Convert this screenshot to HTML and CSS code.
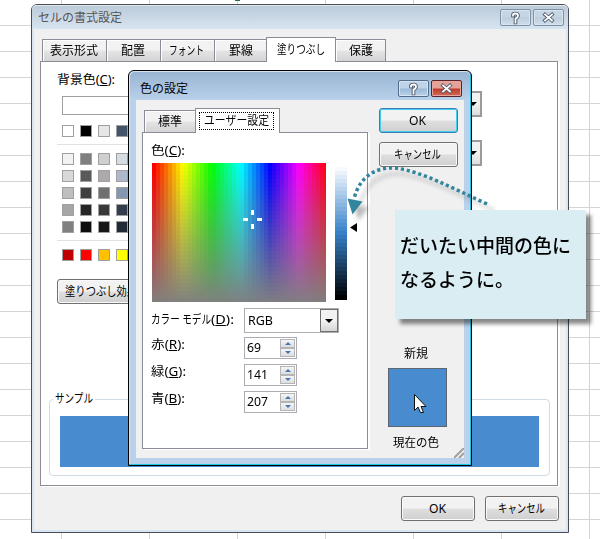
FILE: index.html
```html
<!DOCTYPE html>
<html lang="ja">
<head>
<meta charset="utf-8">
<title>セルの書式設定</title>
<link rel="stylesheet" href="styles.css">
</head>
<body>
<main class="sheet">
  <i class="cell-mark"></i>
  <section class="window outer">
    <header class="titlebar"><span class="t" data-w="84">セルの書式設定</span>
      <span class="caption-btn"><svg width="29" height="15"><path d="M12 5.500V5q0-1.500 2.500-1.500T17 5.500t-2.500 3V9.500M14.500 11v1.500" class="q-o"/><path d="M12 5.500V5q0-1.500 2.500-1.500T17 5.500t-2.500 3V9.500M14.500 11v1.500" class="q-i"/></svg></span>
      <span class="caption-btn"><svg width="29" height="15"><path d="M11 4.500l7 6m0-6l-7 6" class="x-o"/><path d="M11 4.500l7 6m0-6l-7 6" class="x-i"/></svg></span>
    </header>
    <div class="client">
      <nav class="tabs">
        <span class="tab w1"><b class="t" data-w="48">表示形式</b></span><span class="tab w2"><b class="t" data-w="24">配置</b></span><span class="tab w3"><b class="t" data-w="35">フォント</b></span><span class="tab w4"><b class="t" data-w="24">罫線</b></span><span class="tab active w5"><b class="t" data-w="48">塗りつぶし</b></span><span class="tab w6"><b class="t" data-w="24">保護</b></span>
      </nav>
      <div class="panel">
        <div class="fill-area">
          <div class="fill-left">
            <div class="field-label"><span class="t" data-w="58">背景色(<u>C</u>):</span></div>
            <div class="no-color"></div>
            <div class="swatches top"><i class="c1"></i><i class="c2"></i><i class="c3"></i><i class="c4"></i></div>
            <div class="swatches grid"><i class="g1"></i><i class="g2"></i><i class="g3"></i><i class="g4"></i><i class="g5"></i><i class="g6"></i><i class="g7"></i><i class="g8"></i><i class="g9"></i><i class="g10"></i><i class="g11"></i><i class="g12"></i><i class="g13"></i><i class="g14"></i><i class="g15"></i><i class="g16"></i><i class="g17"></i><i class="g18"></i><i class="g19"></i><i class="g20"></i></div>
            <div class="swatches std"><i class="s1"></i><i class="s2"></i><i class="s3"></i><i class="s4"></i></div>
            <button class="btn effects"><span class="t" data-w="72">塗りつぶし効果</span></button>
          </div>
          <div class="fill-right"><div class="combo-end"><i></i></div><div class="combo-end"><i></i></div></div>
        </div>
        <fieldset class="sample"><legend><span class="t" data-w="38">サンプル</span></legend><div class="sample-color"></div></fieldset>
      </div>
      <footer class="actions"><button class="btn"><span class="t" data-w="17">OK</span></button><button class="btn"><span class="t" data-w="47">キャンセル</span></button></footer>
    </div>
  </section>

  <section class="window inner">
    <header class="titlebar"><span class="t" data-w="48">色の設定</span>
      <span class="caption-btn"><svg width="29" height="15"><path d="M12 5.500V5q0-1.500 2.500-1.500T17 5.500t-2.500 3V9.500M14.500 11v1.500" class="q-o"/><path d="M12 5.500V5q0-1.500 2.500-1.500T17 5.500t-2.500 3V9.500M14.500 11v1.500" class="q-i"/></svg></span>
      <span class="caption-btn close"><svg width="29" height="15"><path d="M11 4.500l7 6m0-6l-7 6" class="x-o"/><path d="M11 4.500l7 6m0-6l-7 6" class="x-i"/></svg></span>
    </header>
    <div class="client">
      <div class="main-col">
        <nav class="tabs"><span class="tab w7"><b class="t" data-w="24">標準</b></span><span class="tab active w8"><b class="focus"><span class="t" data-w="65">ユーザー設定</span></b></span></nav>
        <div class="panel">
          <div class="color-label"><span class="t" data-w="34">色(<u>C</u>):</span></div>
          <div class="pickers">
            <canvas class="spectrum" width="174" height="139"></canvas>
            <canvas class="ramp" width="12" height="133"></canvas>
            <svg class="marker" width="7" height="9"><path d="M0 4.500L7 0V9z"/></svg>
          </div>
          <div class="form">
            <label class="model"><span class="t" data-w="60">カラー モデル</span><span class="t" data-w="23">(<u>D</u>):</span></label><div class="select"><span class="t" data-w="25">RGB</span><span class="drop"><i></i></span></div>
            <label><span class="t" data-w="34">赤(<u>R</u>):</span></label><div class="spin"><span class="t" data-w="14">69</span><span class="steps"><i></i><i></i></span></div>
            <label><span class="t" data-w="35">緑(<u>G</u>):</span></label><div class="spin"><span class="t" data-w="21">141</span><span class="steps"><i></i><i></i></span></div>
            <label><span class="t" data-w="34">青(<u>B</u>):</span></label><div class="spin"><span class="t" data-w="21">207</span><span class="steps"><i></i><i></i></span></div>
          </div>
        </div>
      </div>
      <aside class="side">
        <button class="btn primary"><span class="t" data-w="17">OK</span></button>
        <button class="btn"><span class="t" data-w="47">キャンセル</span></button>
        <div class="new-label"><span class="t" data-w="24">新規</span></div>
        <div class="preview"></div>
        <div class="current-label"><span class="t" data-w="46">現在の色</span></div>
      </aside>
      <svg class="grip" width="10" height="10"><path d="M0 10L10 0M5 10l5-5"/></svg>
    </div>
  </section>

  <svg class="overlay" width="600" height="539">
    <g class="arrow"><path class="dots" d="M487 204C452 188 421 171 395 168C374 167 359 178 354 199"/><path class="head" d="M347.500 198.500L362.500 201.500L352.500 214.500z"/></g>
    <path class="cross" d="M243 219.500h5M257 219.500h5M252.500 210v5M252.500 224v5"/>
    <path class="pointer" d="M414.500 394.500v16l3.500-3.500 2.500 5.500h3l-2.500-6h5z"/>
  </svg>
  <div class="callout"><span class="t" data-w="171">だいたい中間の色に</span><span class="t" data-w="114">なるように。</span></div>
</main>
<script src="script.js"></script>
</body>
</html>
```
FILE: styles.css
```css
*{box-sizing:border-box}
body{margin:0;font:12px/16px "Noto Sans","Noto Sans CJK JP",sans-serif;color:#000;overflow:hidden}
b,button{font:inherit}
u{text-underline-offset:1px}
.t{display:inline-block;white-space:nowrap;transform-origin:0 50%;flex:none}
.sheet{position:relative;width:600px;height:539px;overflow:hidden;background:linear-gradient(90deg,#d4d4d4 1px,transparent 1px) 61px 0/88px 26px,linear-gradient(#d4d4d4 1px,transparent 1px) 0 25px/88px 26px,#fff}
.cell-mark{position:absolute;left:235px;top:0;width:5px;height:1px;background:#217346}
.window{position:absolute;display:flex;flex-direction:column}
.outer{left:31px;top:4px;width:538px;height:529px;border:1px solid #4b4b55;border-radius:6px 6px 0 0;background:#d9e5f1;padding:0 2px 2px}
.titlebar{display:flex;align-items:center;flex:none}
.outer>.titlebar{height:24px;margin:0 -2px;padding:1px 4px 0 6px;background:linear-gradient(#bbcad9,#d7e4f1);border-radius:5px 5px 0 0;box-shadow:inset 0 1px #e3eaf0;color:#555}
.titlebar .t{margin-right:auto}
.caption-btn{width:31px;height:17px;border:1px solid #7f91a8;border-radius:2px;background:linear-gradient(#c7d6e5 48%,#bccddd 50%,#d0deeb);margin-left:2px;box-shadow:inset 0 0 0 1px #d9e4ee}
.caption-btn svg{display:block}
.caption-btn path{fill:none}
.q-o,.x-o{stroke:#4d586a;stroke-width:3.6;stroke-linecap:square}
.q-i,.x-i{stroke:#fff;stroke-width:1.8;stroke-linecap:square}
.outer>.client{background:#f0f0f0;height:502px;padding:8px 8px 0 6px}
.tabs{display:flex;align-items:flex-end;height:24px;position:relative;z-index:1}
.outer .tabs{padding-left:2px}
.tab{height:22px;border:1px solid #8c8c96;border-bottom:0;background:linear-gradient(#f2f2f2 48%,#e4e4e4 52%,#d4d4d4);display:flex;align-items:center;justify-content:center;box-shadow:inset 1px 1px #fff;margin-right:-1px;padding-right:2px}
.tab.active{height:25px;background:#fff;margin-bottom:-1px;z-index:1;box-shadow:none}
.w1{width:65px}.w2{width:55px}.w3{width:55px}.w4{width:53px}.w5{width:70px}.w6{width:51px}.w7{width:52px}.w8{width:85px}
.w4,.w5,.w6,.w7{padding-right:0}
.panel{border:1px solid #8c8c96;background:#fff;box-shadow:2px 1px #fff}
.outer .panel{width:518px;height:425px;padding:9px 7px 0 8px}
.fill-area{display:flex;justify-content:space-between;height:321px;padding:0 68px 0 8px}
.fill-left{width:90px}
.field-label{height:16px;padding-top:1px}
.no-color{margin:9px 0 0 5px;height:19px;border:1px solid #a0a0a0}
.swatches{display:grid;grid-template-columns:repeat(4,12px);column-gap:6px;row-gap:5px;padding-left:5px}
.swatches i{height:12px;border:1px solid #a0a0a0}
.top{height:20px;margin-top:10px}
.grid{border-top:1px solid #e2e2e2;padding-top:8px;height:96px;margin-top:-1px;align-content:start}
.std{border-top:1px solid #e2e2e2;padding-top:8px}
.c1{background:#fff}.c2{background:#000}.c3{background:#e7e6e6}.c4{background:#44546a}
.g1{background:#f2f2f2}.g2{background:#7f7f7f}.g3{background:#d0cece}.g4{background:#d6dce4}.g5{background:#d9d9d9}.g6{background:#595959}.g7{background:#aeaaaa}.g8{background:#adb9ca}.g9{background:#bfbfbf}.g10{background:#404040}.g11{background:#707070}.g12{background:#8496b0}.g13{background:#a6a6a6}.g14{background:#262626}.g15{background:#3a3838}.g16{background:#333f4f}.g17{background:#808080}.g18{background:#0d0d0d}.g19{background:#171717}.g20{background:#222b35}
.s1{background:#c00000}.s2{background:#f00}.s3{background:#ffc000}.s4{background:#ff0}
.btn{display:flex;align-items:center;justify-content:center;padding:0 2px 0 0;width:74px;height:25px;border:1px solid #707070;border-radius:3px;background:linear-gradient(#f2f2f2 48%,#dfdfdf 52%,#cfcfcf);box-shadow:inset 0 0 0 1px #fafafa;color:#000}
.effects{width:90px;margin-top:18px;justify-content:flex-start;padding-left:7px}
.fill-right{padding-top:20px}
.combo-end{width:50px;height:26px;border:2px solid #9a9a9f;background:linear-gradient(#f2f2f2 50%,#ddd);margin-bottom:23px;display:flex;align-items:center;justify-content:flex-end;padding-right:3px}
.combo-end i,.drop i{border:4px solid transparent;border-top-color:#000;border-bottom:0}
.sample{margin:0;padding:0 10px;border:1px solid #d3dce5;border-radius:4px;width:501px;height:84px}
.sample legend{height:14px;line-height:14px;padding:0 2px;margin-left:-7px}
.sample-color{height:51px;margin-top:10px;background:#488ccf;width:479px}
.actions{display:flex;justify-content:flex-end;gap:10px;padding:10px 0 0;margin-right:-1px}
.inner{left:128px;top:70px;width:344px;height:396px;border:1px solid #000;border-radius:6px 6px 0 0;background:#b9d1ea;padding:0 7px;box-shadow:inset -1px -1px #20c5df,inset 1px 1px #d5e4f2}
.inner>.titlebar{height:28px;margin:1px -6px 0;padding:5px 8px 0 10px;background:linear-gradient(#99b4d3,#b9d1ea);border-radius:5px 5px 0 0}
.inner .caption-btn{background:linear-gradient(#bfd4e9 48%,#9bb8d5 52%,#b9d3ec);border-color:#516e91}
.inner .caption-btn.close{background:linear-gradient(#e5a397 48%,#be3b2b 52%,#d46c55);border-color:#56252b;box-shadow:inset 0 0 0 1px #e9a59b}
.inner>.client{position:relative;display:flex;background:#f0f0f0;height:358px;padding:8px 7px 0 6px}
.main-col{width:226px}
.inner .tabs{padding-left:2px}
.focus{border:1px dotted #000;padding:0 4px;height:18px;width:75px}
.inner .panel{width:226px;height:317px;padding:10px 9px 0}
.color-label{height:20px;margin-left:-1px}
.pickers{display:flex;height:140px}
.spectrum{width:174px;height:139px}
.ramp{margin:4px 0 0 9px;width:12px;height:133px}
.marker{margin:60px 0 0 3px}
.form{display:grid;grid-template-columns:92px 95px;grid-template-rows:27px 27px 27px 27px;align-items:start;margin-top:5px}
.form label{padding-top:2px;margin-left:-1px;white-space:nowrap}.form .model{padding-top:4px}
.select{display:flex;align-items:center;width:95px;height:25px;border:1px solid #abadb3;padding-left:3px}
.drop{margin-left:auto;width:18px;height:23px;border:1px solid #707070;background:linear-gradient(#f2f2f2 50%,#d5d5d5);display:flex;align-items:center;justify-content:center}
.spin{display:flex;align-items:center;width:53px;height:22px;border:1px solid #abadb3;padding-left:2px;margin-top:2px}
.steps{margin:0 1px 0 auto;width:15px;display:flex;flex-direction:column}
.steps i{height:9px;border:1px solid #b5b5b9;background:linear-gradient(#f5f5f5,#ddd);display:flex;align-items:center;justify-content:center}
.steps i:after{content:"";border:3px solid transparent;border-top-color:#4774b5;border-bottom:0}
.steps i:first-child:after{transform:rotate(180deg)}
.side{width:79px;margin-left:11px;display:flex;flex-direction:column;align-items:center}
.side .btn{width:79px;margin-bottom:9px;flex:none}
.side .btn.primary{border-color:#3c7fb1;box-shadow:inset 0 0 0 1px #43cdf1}
.new-label{height:16px;margin:170px 6px 0 0}
.preview{width:59px;height:59px;border:1px solid #5e6770;background:#488ccf;margin:6px 2px 0 0;flex:none}
.current-label{height:16px;margin:8px 5px 0 0}
.grip{position:absolute;right:0;bottom:0}
.grip path{stroke:#a0a0a0;stroke-width:2}
.overlay{position:absolute;left:0;top:0}
.arrow{filter:drop-shadow(6px 6px 2px #0004)}
.dots{fill:none;stroke:#31859c;stroke-width:3.5;stroke-dasharray:3.2 2.8}
.head{fill:#31859c}
.cross{stroke:#fff;stroke-width:3}
.pointer{fill:#fff;stroke:#111}
.callout{position:absolute;left:395px;top:210px;width:191px;height:109px;background:#daedf3;box-shadow:5px 5px 4px #0007;display:flex;flex-direction:column;align-items:flex-start;padding:18px 5px;font:500 19px/34px "Noto Sans CJK JP",sans-serif}
```
FILE: script.js
```js
// Condense each label to its UI width.
document.querySelectorAll('.t').forEach(function (el) {
  var natural = el.getBoundingClientRect().width;
  var target = +el.dataset.w;
  el.style.transform = 'scaleX(' + target / natural + ')';
  el.style.marginRight = el.parentElement.classList.contains('titlebar') ? 'auto' : (target - natural) + 'px';
});
// Hue across, saturation down, in 4px steps.
var s = document.querySelector('.spectrum').getContext('2d');
for (var x = 0; x < 174; x += 4) {
  for (var y = 0; y < 139; y += 4) {
    s.fillStyle = 'hsl(' + x / 174 * 360 + ',' + (100 - y / 139 * 100) + '%,50%)';
    s.fillRect(x, y, 4, 4);
  }
}
// Luminance ramp of the chosen colour.
var r = document.querySelector('.ramp').getContext('2d');
for (var i = 0; i < 133; i += 4) {
  r.fillStyle = 'hsl(209,58%,' + (98 - i / 129 * 98) + '%)';
  r.fillRect(0, i, 12, 4);
}
```
